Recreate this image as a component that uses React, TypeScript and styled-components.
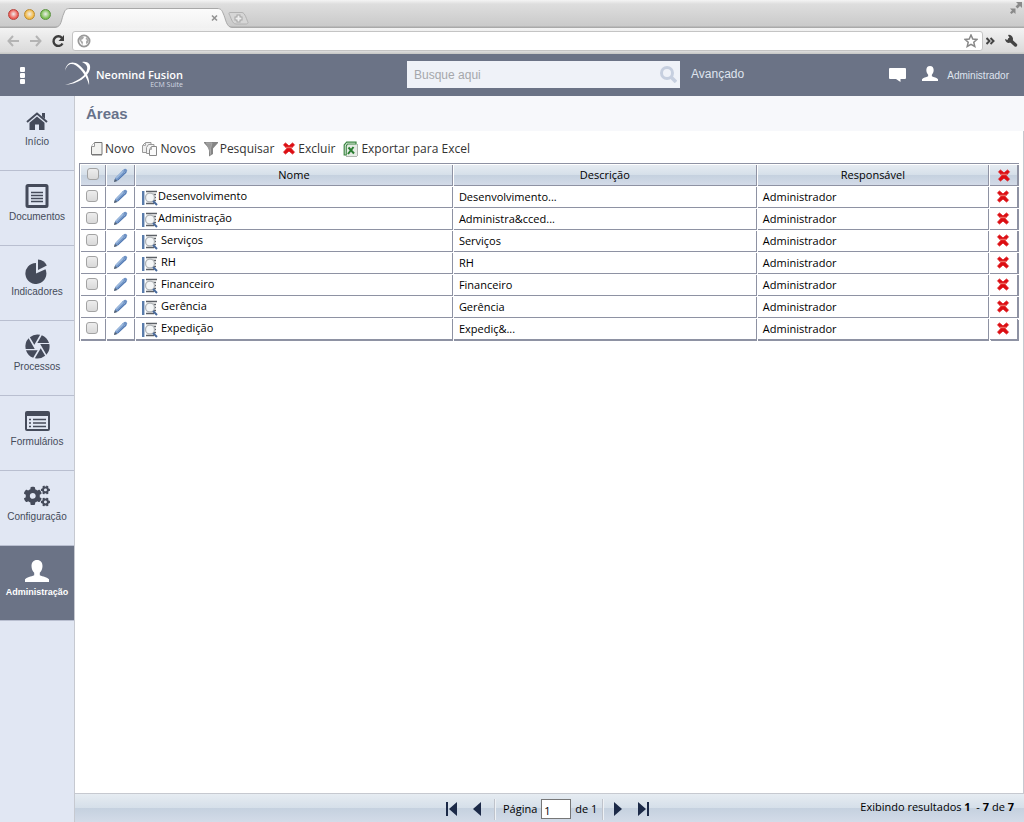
import React from "react";
import styled, { createGlobalStyle, css } from "styled-components";
import { FaCogs } from "react-icons/fa";
import { MdCamera } from "react-icons/md";

const ui = `"Open Sans", "Noto Sans", sans-serif`;
const arial = `"Liberation Sans", Arial, sans-serif`;
const slate = "#6b7386";
const line = "#8e92a3";
const glossy = "linear-gradient(#e6ecf2 0, #d5dfe9 50%, #c5d1df 51%, #d3dbe8 100%)";

const GlobalStyle = createGlobalStyle`
  * { box-sizing: border-box; }
  body { margin: 0; background: #fff; font-family: ${ui}; color: #111; }
  button { border: 0; padding: 0; background: none; font: inherit; color: inherit; cursor: pointer; }
  a { color: inherit; text-decoration: none; }
  svg { display: block; flex: none; }
`;

const Page = styled.div`
  min-height: 100vh;
  display: flex;
  flex-direction: column;
`;

/* browser window frame */
const TabStrip = styled.div`
  height: 28px;
  display: flex;
  background: linear-gradient(#f4f4f4 0, #dedede 4px, #cacaca 26px, #a9a9a9 27px);
`;
const Lights = styled.div`
  display: flex;
  gap: 5px;
  padding: 9px 0 0 8px;
  width: 55px;
`;
const Light = styled.button<{ $tone: string; $rim: string }>`
  width: 11px;
  height: 11px;
  border-radius: 50%;
  border: 1px solid ${(p) => p.$rim};
  background: radial-gradient(circle at 50% 45%, #fff9 0, ${(p) => p.$tone} 65%);
`;
const Expand = styled.button`
  margin: 1px 1px 0 auto;
  height: 14px;
`;
const AddressBar = styled.div`
  height: 26px;
  display: flex;
  align-items: center;
  background: linear-gradient(#f3f3f3, #dadada 24px, #c9cac8 25px);
`;
const ToolButton = styled.button<{ $w?: number }>`
  width: ${(p) => p.$w ?? 23}px;
  height: 20px;
  display: flex;
  align-items: center;
  justify-content: center;
`;
const Address = styled.div`
  flex: 1;
  height: 20px;
  margin-left: 2px;
  padding: 0 4px;
  display: flex;
  align-items: center;
  background: #fff;
  border: 1px solid #c4c4c4;
  border-radius: 3px;
`;
const AddressInput = styled.input`
  flex: 1;
  min-width: 0;
  border: 0;
  outline: 0;
  background: transparent;
  font: 12px ${arial};
`;

/* application header */
const Header = styled.header`
  height: 42px;
  display: grid;
  grid-template-columns: 407px minmax(180px, 273px) 1fr;
  background: ${slate};
  color: #dfe4ee;
  font-family: ${arial};
`;
const Brand = styled.div`
  display: flex;
  align-items: center;
`;
const MenuButton = styled.button`
  width: 45px;
  height: 42px;
  display: flex;
  align-items: center;
  justify-content: center;
`;
const Logo = styled.a`
  display: flex;
  margin-left: 19px;
  gap: 4px;
  color: #fff;
`;
const LogoName = styled.span`
  display: flex;
  flex-direction: column;
  align-items: flex-end;
  padding-top: 8px;
  font: 600 11px/12px ${ui};
`;
const LogoSuite = styled.span`
  font: 7px/8px ${ui};
  color: #d5dae4;
`;
const Search = styled.form`
  margin: 7px 0 8px;
  padding: 0 3px 0 7px;
  display: flex;
  align-items: center;
  background: #eff2f8;
`;
const SearchInput = styled.input`
  flex: 1;
  min-width: 0;
  border: 0;
  padding: 0;
  outline: 0;
  background: transparent;
  font: 12px/16px ${arial};
  &::placeholder { color: #a5a7ab; opacity: 1; }
`;
const HeaderRight = styled.div`
  display: flex;
  justify-content: space-between;
  padding: 0 15px 0 11px;
`;
const Advanced = styled.a`
  font-size: 12px;
  line-height: 40px;
`;
const User = styled.div`
  display: flex;
  align-items: center;
`;
const UserLink = styled.a`
  display: flex;
  align-items: center;
  gap: 9px;
  margin-left: 16px;
  font-size: 10px;
  line-height: 14px;
  padding-top: 1px;
  svg { margin-bottom: 5px; color: #fff; }
`;

/* body */
const Body = styled.div`
  flex: 1;
  display: flex;
`;
const Sidebar = styled.nav`
  width: 75px;
  flex: none;
  background: #e1e7f3;
  border-right: 1px solid #c6c9d0;
`;
const SideItem = styled.a<{ $active?: boolean }>`
  height: 75px;
  padding-top: 12px;
  display: flex;
  flex-direction: column;
  align-items: center;
  gap: 2px;
  border-bottom: 1px solid #b9bfd0;
  color: #454b5a;
  font: 10px/12px ${arial};
  ${(p) => p.$active && css`
    background: ${slate};
    color: #fff;
    font-weight: bold;
    font-size: 9px;
  `}
`;
const SideIcon = styled.span`
  height: 26px;
  display: flex;
  align-items: center;
`;
const Main = styled.main`
  flex: 1;
  min-width: 0;
  display: flex;
  flex-direction: column;
`;
const Title = styled.h1`
  margin: 0;
  padding-left: 11px;
  background: #f7f8fb;
  color: #67728a;
  font: bold 15px/35px ${arial};
`;
const Panel = styled.section`
  flex: 1;
  padding: 0 4px;
  border-right: 1px solid #c6c9d0;
`;
const Actions = styled.div`
  height: 32px;
  padding: 3px 0 0 11px;
  display: flex;
  align-items: center;
  gap: 8px;
`;
const Action = styled.button`
  display: flex;
  align-items: center;
  gap: 2px;
  font-size: 12px;
  line-height: 18px;
  color: #333;
`;
const Grid = styled.table`
  width: 100%;
  table-layout: fixed;
  border-collapse: separate;
  border-spacing: 1px;
  border: solid ${line};
  border-width: 1px 0 0 1px;
  font-size: 11px;
  line-height: 16px;
  color: #000;
`;
const cell = css`
  height: 21px;
  padding: 0;
  border: solid ${line};
  border-width: 0 1px 1px 0;
  &:last-child { box-shadow: 1px 0 0 ${line}; }
`;
const Th = styled.th`
  ${cell}
  font-weight: normal;
  text-align: center;
  background: ${glossy};
`;
const Td = styled.td<{ $icon?: boolean }>`
  ${cell}
  padding: ${(p) => (p.$icon ? "0 1px 1px 0" : "0 0 0 5px")};
  tr:last-child > & { box-shadow: 0 1px 0 ${line}; }
  tr:last-child > &:last-child { box-shadow: 1px 1px 0 ${line}; }
`;
const Col = styled.col<{ $w: string }>`
  width: ${(p) => p.$w};
`;
const Check = styled.input`
  appearance: none;
  display: block;
  width: 12px;
  height: 12px;
  margin: 0 auto 2px 5px;
  border: 1px solid #a3a3a3;
  border-radius: 3px;
  background: linear-gradient(#ededed, #d9d9d9);
  ${Th} & { margin-left: 6px; }
`;
const IconButton = styled.button`
  display: block;
  margin: 0 auto;
`;
const NameLink = styled.a<{ $wide?: boolean }>`
  display: flex;
  gap: ${(p) => (p.$wide ? 3 : 0)}px;
  height: 18px;
  line-height: 16px;
  svg { margin: 2px 0 0 1px; }
`;

/* pager */
const Pager = styled.footer`
  height: 29px;
  border-top: 1px solid #c6c9d0;
  background: ${glossy};
  display: grid;
  grid-template-columns: 370px auto 1fr;
  align-items: center;
  font-size: 11px;
  line-height: 16px;
  color: #000;
`;
const PagerNav = styled.div`
  grid-column: 2;
  display: flex;
  align-items: center;
  padding-top: 2px;
`;
const PageButton = styled.button<{ $gap?: number }>`
  margin-left: ${(p) => p.$gap ?? 0}px;
`;
const Divider = styled.span<{ $gap?: number }>`
  width: 2px;
  height: 21px;
  margin-left: ${(p) => p.$gap ?? 0}px;
  background: #bfc3cb;
  border-right: 1px solid #eef1f5;
`;
const PageLabel = styled.label`
  display: flex;
  align-items: center;
  gap: 4px;
  margin: 0 5px 0 7px;
`;
const PageInput = styled.input`
  width: 30px;
  height: 20px;
  padding: 2px 2px 0;
  border: 1px solid #777;
  font: 11px/16px ${ui};
`;
const Results = styled.p`
  margin: 0 10px 2px 0;
  text-align: right;
  white-space: pre;
`;

const Pencil = () => (
  <svg width="15" height="15" viewBox="0 0 15 15">
    <path d="M1 14l1.200-4L10 2Q12 .2 13.500 1.200T13.500 4.500L5 12.500z" fill="#7093c4" />
    <path d="M3.200 10.200L10.800 2.600" stroke="#9dbadf" strokeWidth="1.500" />
    <path d="M5 12L13 4.200" stroke="#5279b3" />
    <path d="M9.500 2.500l3.200 3.200" stroke="#86a5cf" />
    <path d="M1 14l.8-3L4.500 13z" fill="#54606f" />
  </svg>
);
const Cross = () => (
  <svg width="14" height="13" viewBox="0 0 14 13">
    <path d="M3.500 1L7 4l3.500-3L12.500 2.800 9.200 6.500l3.300 3.700-2 1.800L7 9l-3.500 3-2-1.800 3.300-3.700-3.300-3.700z" fill="#dc0d12" stroke="#dc0d12" strokeWidth=".8" strokeLinejoin="round" />
    <path d="M4 5.500h6" stroke="#ef6a62" strokeWidth="1.500" />
  </svg>
);
const Detail = () => (
  <svg width="16" height="16" viewBox="0 0 16 16">
    <path d="M1 1v14" stroke="#5a7cab" strokeWidth="2" />
    <path d="M2.500 1v14" stroke="#b8c8dc" />
    <path d="M4 1.500h11M11 4.500h3M12 7.500h2M11 10.500h3M4 13.500h8" stroke="#5c6066" strokeWidth="1.300" />
    <circle cx="8" cy="7.500" r="4.500" fill="#f4f6f7" stroke="#b2b6b9" strokeWidth="1.300" />
    <path d="M11 11l4 4" stroke="#46689a" strokeWidth="2" />
  </svg>
);
const Sheet = () => (
  <svg width="13" height="16" viewBox="0 0 13 16">
    <path d="M4.500 1.500h7.500v12H1.500v-8z" fill="#f2f2f0" stroke="#777" />
    <path d="M4.500 1.500v4h-3" fill="#fff" stroke="#999" />
    <path d="M2 14.500h10" stroke="#bbb" />
  </svg>
);
const Sheets = () => (
  <svg width="16" height="16" viewBox="0 0 16 16">
    <path d="M3.500 1.500H9v10H.500v-7z" fill="#eee" stroke="#999" />
    <path d="M3.500 1.500v3h-3" fill="none" stroke="#aaa" />
    <path d="M6.500 3.500H12v9H4.500v-6z" fill="#f4f4f4" stroke="#999" />
    <path d="M9.500 5.500h5v9h-7v-6z" fill="#fafafa" stroke="#888" />
    <path d="M9.500 5.500v3h-2" fill="none" stroke="#aaa" />
  </svg>
);
const Funnel = () => (
  <svg width="14" height="16" viewBox="0 0 14 16">
    <path d="M0 1h14v1L9 7.500V13L5 15.500v-8L0 2z" fill="#858585" />
    <path d="M2 2h6L6.500 7.500v6" stroke="#a9a9a9" fill="#999" />
  </svg>
);
const Excel = () => (
  <svg width="16" height="16" viewBox="0 0 16 16">
    <path d="M3.500 3h10.500v12H2z" fill="#e6ebe5" />
    <path d="M14.500 3v12M3 15.500h11" stroke="#b0b6b0" />
    <path d="M1.200 14V4l2.500-2.800H13V3H4.500L3.200 5v9z" fill="#fff" stroke="#3a8540" strokeWidth="1.200" />
    <path d="M5.500 6.500l5.500 6M10.500 6L5 13" stroke="#2a7d31" strokeWidth="2" />
  </svg>
);
const Person = ({ w, h }: { w: number; h: number }) => (
  <svg width={w} height={h} viewBox="0 0 24 22" preserveAspectRatio="none" fill="currentColor">
    <path d="M12 0c3.600 0 5.500 2.400 5.500 6 0 3-1.200 5.300-2.700 6.800v2.400c3 1.400 7.700 2 9.200 4.100V22H0v-2.700c1.500-2.100 6.200-2.700 9.200-4.100v-2.400C7.700 11.300 6.500 9 6.500 6 6.500 2.400 8.400 0 12 0z" />
  </svg>
);
const Home = () => (
  <svg width="22" height="18" viewBox="0 0 22 18" fill="currentColor">
    <path d="M11 4.500l7.500 6.200V18H13v-5.500H9V18H3.500v-7.300z" />
    <path d="M1 10L11 1.600 21 10" fill="none" stroke="currentColor" strokeWidth="2" />
    <path d="M16 1h3v6l-3-2.500z" />
  </svg>
);
const Documents = () => (
  <svg width="24" height="24" viewBox="0 0 24 24" fill="none" stroke="currentColor">
    <rect x="2" y="1.500" width="20" height="21" rx="1" strokeWidth="3" />
    <path d="M6 8.500h12M6 11.500h12M6 14.500h12M6 17.500h12" strokeWidth="1.300" />
  </svg>
);
const Pie = () => (
  <svg width="24" height="25" viewBox="0 0 24 25" fill="currentColor">
    <path d="M11 4v10.500l9.500-4.200A10.500 10.500 0 1 1 11 4z" />
    <path d="M13 .500a10.500 10.500 0 0 1 8.800 6L13 11z" />
  </svg>
);
const Forms = () => (
  <svg width="25" height="20" viewBox="0 0 25 20" fill="none" stroke="currentColor">
    <rect x="1" y="1" width="23" height="18" rx="1" strokeWidth="2" />
    <path d="M1 3h23" strokeWidth="4" />
    <path d="M4 8.500h2M8 8.500h13M4 12h2M8 12h13M4 15.500h2M8 15.500h13" strokeWidth="1.600" />
  </svg>
);

const sideItems: { label: string; icon: React.ReactNode; active?: boolean }[] = [
  { label: "Início", icon: <Home /> },
  { label: "Documentos", icon: <Documents /> },
  { label: "Indicadores", icon: <Pie /> },
  { label: "Processos", icon: <MdCamera size={29} /> },
  { label: "Formulários", icon: <Forms /> },
  { label: "Configuração", icon: <FaCogs size={26} /> },
  { label: "Administração", icon: <Person w={24} h={22} />, active: true },
];

const actions = [
  { label: "Novo", icon: <Sheet /> },
  { label: "Novos", icon: <Sheets /> },
  { label: "Pesquisar", icon: <Funnel /> },
  { label: "Excluir", icon: <Cross /> },
  { label: "Exportar para Excel", icon: <Excel /> },
];

const rows = [
  { name: "Desenvolvimento", text: "Desenvolvimento..." },
  { name: "Administração", text: "Administra&cced..." },
  { name: "Serviços", text: "Serviços", wide: true },
  { name: "RH", text: "RH", wide: true },
  { name: "Financeiro", text: "Financeiro", wide: true },
  { name: "Gerência", text: "Gerência", wide: true },
  { name: "Expedição", text: "Expediç&...", wide: true },
];

const BrowserFrame = () => (
  <>
    <TabStrip>
      <Lights>
        <Light aria-label="Fechar" $tone="#ee5b53" $rim="#b5443e" />
        <Light aria-label="Minimizar" $tone="#f3b943" $rim="#b98a32" />
        <Light aria-label="Maximizar" $tone="#7cc052" $rim="#5b9240" />
      </Lights>
      <svg width="196" height="28" viewBox="0 0 196 28">
        <defs>
          <linearGradient id="tab" x2="0" y2="1">
            <stop stopColor="#fcfcfc" />
            <stop offset="1" stopColor="#f1f1f1" />
          </linearGradient>
        </defs>
        <path d="M0 27.500C7 27 6 19 9 13c1-3 2-4.500 6-4.500h147c4 0 5 2 6 4.500 3 6 3 14 9 14.500V28H0z" fill="url(#tab)" />
        <path d="M0 27.500C7 27 6 19 9 13c1-3 2-4.500 6-4.500h147c4 0 5 2 6 4.500 3 6 3 14 9 14.500" fill="none" stroke="#a8a8a8" />
        <path d="M157 15.500l5 5m0-5l-5 5" stroke="#929292" strokeWidth="1.600" />
        <path d="M175 12.500h12c3 0 5 8 6 10 0 1-1 1.500-2 1.500h-10c-4 0-5-7-7-10 0-1 0-1.500 1-1.500z" fill="#d6d6d6" stroke="#b2b2b2" />
        <path d="M183.500 14.500v8M179.500 18.500h8" stroke="#a5a5a5" strokeWidth="4" />
        <path d="M183.500 15.500v6M180.500 18.500h6" stroke="#eee" strokeWidth="2" />
      </svg>
      <Expand aria-label="Tela cheia">
        <svg width="14" height="14" viewBox="0 0 14 14" fill="#8a8a8a">
          <path d="M7 1h6v6l-2-2-2.500 2.500-2-2L9 3zM1 7.500h5.500V13L4.700 11.200 2.500 13 1 11.500l2-2z" />
        </svg>
      </Expand>
    </TabStrip>
    <AddressBar>
      <ToolButton $w={25} aria-label="Voltar">
        <svg width="12" height="12" viewBox="0 0 12 12" fill="none" stroke="#b4b4b4" strokeWidth="2"><path d="M6 1L1.500 6 6 11M2 6h10" /></svg>
      </ToolButton>
      <ToolButton $w={21} aria-label="Avançar">
        <svg width="12" height="12" viewBox="0 0 12 12" fill="none" stroke="#b4b4b4" strokeWidth="2"><path d="M6 1l4.500 5L6 11M10 6H0" /></svg>
      </ToolButton>
      <ToolButton $w={24} aria-label="Recarregar">
        <svg width="14" height="14" viewBox="0 0 14 14"><path d="M11.500 9.500A4.800 4.800 0 1 1 11 4" fill="none" stroke="#3d3d3d" strokeWidth="2.400" /><path d="M13 1v6H7.500z" fill="#3d3d3d" /></svg>
      </ToolButton>
      <Address>
        <svg width="14" height="14" viewBox="0 0 14 14"><circle cx="7" cy="7" r="5.600" fill="#fff" stroke="#999" strokeWidth="1.800" /><path d="M2 5l3-3 2 1-1 2-2 1 2 2-.5 3L4 8.500zM9.500 3l2.500 3-1 3-2 1V7.500L10 6 8.500 5z" fill="#a8a8a8" /></svg>
        <AddressInput aria-label="Endereço" />
        <svg width="14" height="14" viewBox="0 0 14 14"><path d="M7 1l1.800 4 4.200.400-3.200 2.900 1 4.200L7 10.300l-3.800 2.200 1-4.200L1 5.400 5.200 5z" fill="#fff" stroke="#888" strokeWidth="1.500" /></svg>
      </Address>
      <ToolButton $w={15} aria-label="Mais">
        <svg width="9" height="8" viewBox="0 0 9 8" fill="none" stroke="#444" strokeWidth="2"><path d="M.500 1l3 3-3 3M4.500 1l3 3-3 3" /></svg>
      </ToolButton>
      <ToolButton $w={26} aria-label="Ferramentas">
        <svg width="14" height="14" viewBox="0 0 14 14"><path d="M5.500 5.500l6 5.500" stroke="#444" strokeWidth="3.400" strokeLinecap="round" /><path d="M4 1a4 4 0 1 1-3 4l2.500 1L5.500 4z" fill="#444" /></svg>
      </ToolButton>
    </AddressBar>
  </>
);

export default function App() {
  return (
    <Page>
      <GlobalStyle />
      <BrowserFrame />
      <Header>
        <Brand>
          <MenuButton aria-label="Menu">
            <svg width="6" height="18" viewBox="0 0 6 18" fill="#fff"><rect width="5" height="5" y="1" rx="1" /><rect width="5" height="5" y="7" rx="1" /><rect width="5" height="5" y="13" rx="1" /></svg>
          </MenuButton>
          <Logo href="#">
            <svg width="28" height="26" viewBox="0 0 28 26">
              <path d="M1 10C2 2 8-1 15 4c6 5 11 12 10 20C23 16 18 9 12 4.500 7 1.500 3 3 1 10z" fill="#fff" />
              <path d="M18 1c6-1 9 2 8 7-2 8-12 15-25 16 11-3 20-8 22-15 1-4-1-6-5-8z" fill="#fff" />
            </svg>
            <LogoName>
              Neomind Fusion
              <LogoSuite>ECM Suite</LogoSuite>
            </LogoName>
          </Logo>
        </Brand>
        <Search>
          <SearchInput placeholder="Busque aqui" aria-label="Busque aqui" />
          <button type="button" aria-label="Buscar">
            <svg width="17" height="17" viewBox="0 0 17 17" fill="none" stroke="#c6cfdf"><circle cx="7" cy="7" r="5.500" strokeWidth="3" /><path d="M11 11l5 5" strokeWidth="3.500" /></svg>
          </button>
        </Search>
        <HeaderRight>
          <Advanced href="#">Avançado</Advanced>
          <User>
            <button aria-label="Mensagens">
              <svg width="17" height="14" viewBox="0 0 17 14" fill="#fff"><path d="M1 0h15q1 0 1 1v9q0 1-1 1h-4.500v3L7 11H1q-1 0-1-1V1q0-1 1-1z" /></svg>
            </button>
            <UserLink href="#">
              <Person w={16} h={15} />
              Administrador
            </UserLink>
          </User>
        </HeaderRight>
      </Header>
      <Body>
        <Sidebar>
          {sideItems.map((s) => (
            <SideItem key={s.label} href="#" $active={s.active}>
              <SideIcon>{s.icon}</SideIcon>
              {s.label}
            </SideItem>
          ))}
        </Sidebar>
        <Main>
          <Title>Áreas</Title>
          <Panel>
            <Actions>
              {actions.map((a) => (
                <Action key={a.label}>{a.icon}{a.label}</Action>
              ))}
            </Actions>
            <Grid>
              <colgroup>
                <Col $w="25px" />
                <Col $w="28px" />
                <Col $w="34%" />
                <Col $w="32.500%" />
                <Col $w="auto" />
                <Col $w="28px" />
              </colgroup>
              <thead>
                <tr>
                  <Th><Check type="checkbox" aria-label="Selecionar todos" /></Th>
                  <Th><IconButton aria-label="Editar"><Pencil /></IconButton></Th>
                  <Th>Nome</Th>
                  <Th>Descrição</Th>
                  <Th>Responsável</Th>
                  <Th><IconButton aria-label="Excluir"><Cross /></IconButton></Th>
                </tr>
              </thead>
              <tbody>
                {rows.map((r) => (
                  <tr key={r.name}>
                    <Td $icon><Check type="checkbox" aria-label={r.name} /></Td>
                    <Td $icon><IconButton aria-label="Editar"><Pencil /></IconButton></Td>
                    <Td><NameLink href="#" $wide={r.wide}><Detail />{r.name}</NameLink></Td>
                    <Td>{r.text}</Td>
                    <Td>Administrador</Td>
                    <Td $icon><IconButton aria-label="Excluir"><Cross /></IconButton></Td>
                  </tr>
                ))}
              </tbody>
            </Grid>
          </Panel>
          <Pager>
            <PagerNav>
              <PageButton aria-label="Primeira">
                <svg width="13" height="14" viewBox="0 0 13 14" fill="#1c2a48"><path d="M1 0h2v14H1zM12 0v14L4 7z" /></svg>
              </PageButton>
              <PageButton $gap={15} aria-label="Anterior">
                <svg width="9" height="14" viewBox="0 0 9 14" fill="#1c2a48"><path d="M8 0v14L0 7z" /></svg>
              </PageButton>
              <Divider $gap={12} />
              <PageLabel>Página <PageInput defaultValue="1" /> de 1</PageLabel>
              <Divider />
              <PageButton $gap={9} aria-label="Próxima">
                <svg width="9" height="14" viewBox="0 0 9 14" fill="#1c2a48"><path d="M1 0v14l8-7z" /></svg>
              </PageButton>
              <PageButton $gap={15} aria-label="Última">
                <svg width="13" height="14" viewBox="0 0 13 14" fill="#1c2a48"><path d="M1 0v14l8-7zM10 0h2v14h-2z" /></svg>
              </PageButton>
            </PagerNav>
            <Results>Exibindo resultados <b>1</b>  - <b>7</b> de <b>7</b></Results>
          </Pager>
        </Main>
      </Body>
    </Page>
  );
}
